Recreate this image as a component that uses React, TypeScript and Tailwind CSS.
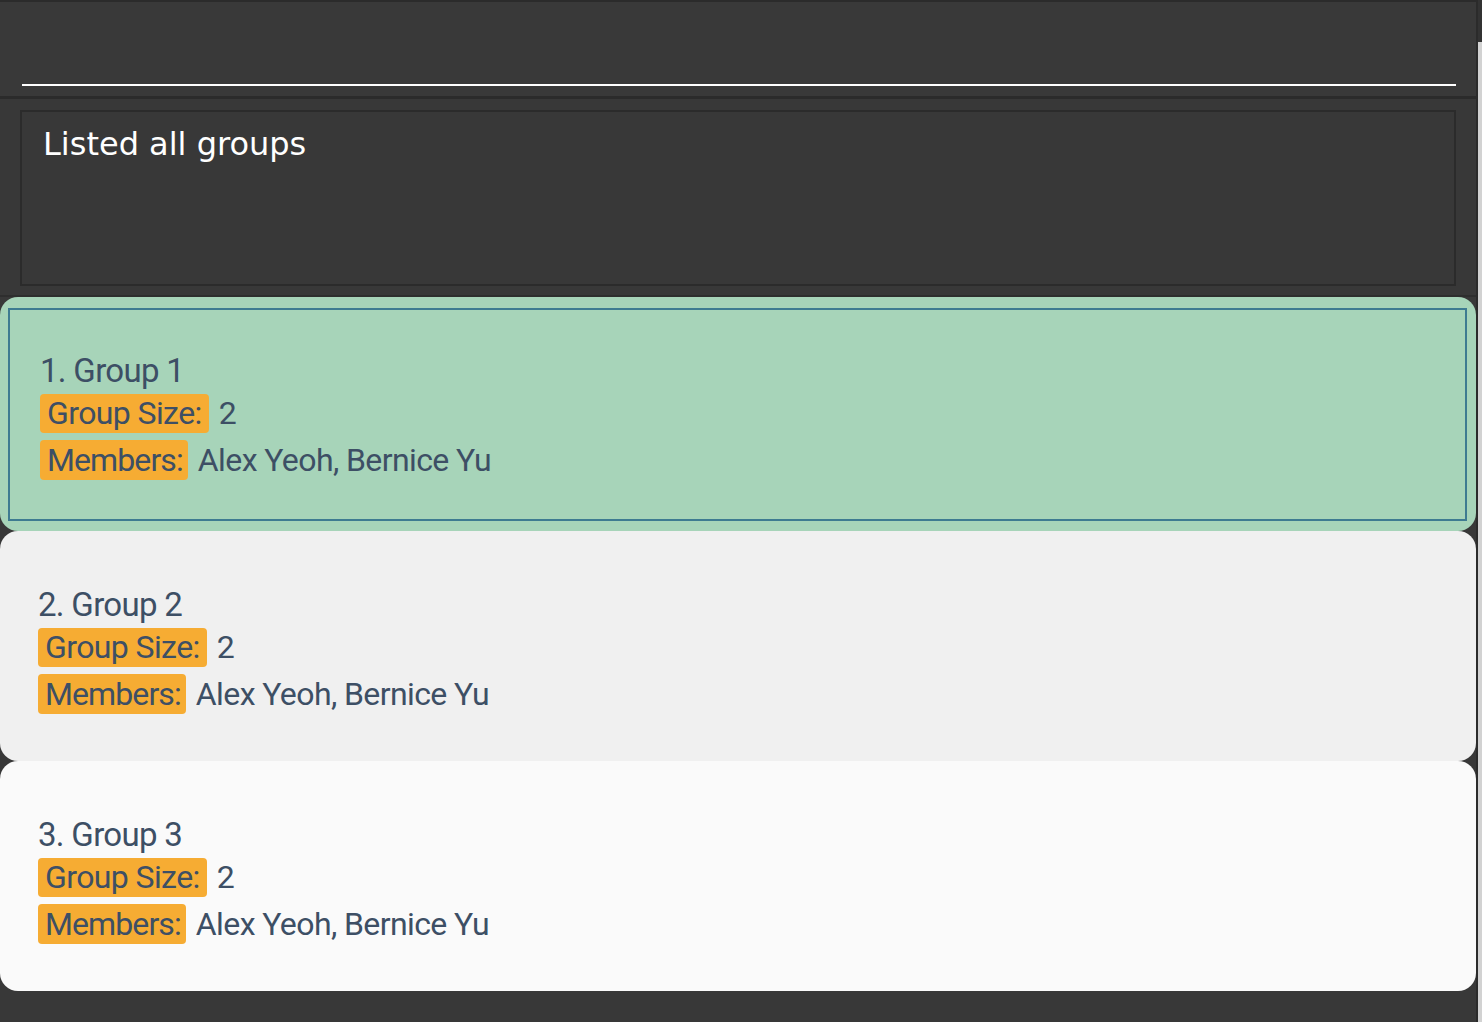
const groups = [
  { id: 1, name: "Group 1", size: 2, members: "Alex Yeoh, Bernice Yu" },
  { id: 2, name: "Group 2", size: 2, members: "Alex Yeoh, Bernice Yu" },
  { id: 3, name: "Group 3", size: 2, members: "Alex Yeoh, Bernice Yu" },
]

function GroupBody({ group }: { group: (typeof groups)[number] }) {
  return (
    <div className="flex flex-col text-[32px] text-[#3d4f65] tracking-[-0.6px]">
      <div className="h-[38px] text-[33px] leading-[38px] tracking-[-0.7px]">
        {group.id}. {group.name}
      </div>
      <div className="mt-[4px] flex items-center">
        <span className="h-[39px] leading-[39px] rounded-[4px] bg-[#f6ac33] px-[7px]">Group Size:</span>
        <span className="ml-[10px] leading-[39px]">{group.size}</span>
      </div>
      <div className="mt-[7px] flex items-center">
        <span className="h-[40px] leading-[40px] rounded-[4px] bg-[#f6ac33] pl-[7px] pr-[5px] tracking-[-0.9px]">Members:</span>
        <span className="ml-[10px] leading-[40px]">{group.members}</span>
      </div>
    </div>
  )
}

export default function App() {
  return (
    <div className="flex h-[1022px] w-[1482px] overflow-hidden bg-[#383838] font-['Roboto',sans-serif]">
      <div className="flex w-[1476px] flex-col">
        <div className="h-[2px] bg-[#2b2b2b]" />
        {/* command box */}
        <div className="h-[94px] bg-[#393939] px-[22px] pt-[82px] pr-[20px]">
          <div className="h-[2px] bg-white" />
        </div>
        <div className="h-[3px] bg-[#2b2b2b]" />

        {/* result display */}
        <div className="px-[20px] pt-[11px]">
          <div className="h-[176px] border-2 border-[#2b2b2b] pl-[21px] pt-[8px]">
            <p className="font-['DejaVu_Sans',sans-serif] text-[32px] text-white">Listed all groups</p>
          </div>
        </div>
        <div className="mt-[9px] h-[2px] bg-[#2e2e2e]" />

        {/* group list */}
        <div className="flex flex-col">
          <div className="h-[234px] rounded-[18px] bg-[#a7d4b9] pt-[11px] pb-[10px] pl-[8px] pr-[9px]">
            <div className="h-full border-2 border-[#3e7b91] pl-[30px] pt-[42px]">
              <GroupBody group={groups[0]} />
            </div>
          </div>
          <div className="h-[230px] rounded-[18px] bg-[#f0f0f0] pl-[38px] pt-[55px]">
            <GroupBody group={groups[1]} />
          </div>
          <div className="h-[230px] rounded-[18px] bg-[#fafafa] pl-[38px] pt-[55px]">
            <GroupBody group={groups[2]} />
          </div>
        </div>
      </div>

      {/* window edge */}
      <div className="w-[2px] bg-[#2b2b2b]" />
      <div className="flex w-[4px] flex-col">
        <div className="h-[42px] bg-[#333333]" />
        <div className="flex-1 bg-[#d2d2d2]" />
      </div>
    </div>
  )
}
